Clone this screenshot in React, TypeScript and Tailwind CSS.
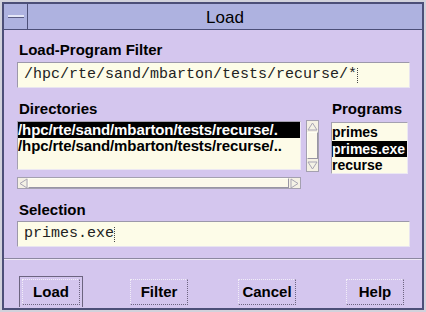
import React from "react"

const sans = { fontFamily: '"Liberation Sans", Arial, sans-serif' }

function Arrow({ dir }: { dir: "up" | "down" | "left" | "right" }) {
  const pts = {
    up: "1,8 5.5,1 10,8",
    down: "1,1 5.5,8 10,1",
    left: "8,1 1,5.5 8,10",
    right: "1,1 8,5.5 1,10",
  }[dir]
  return (
    <svg width={dir === "up" || dir === "down" ? 11 : 9} height={dir === "up" || dir === "down" ? 9 : 11}>
      <polygon points={pts} fill="#f4f2e6" stroke="#a8a4b4" strokeWidth="1" />
    </svg>
  )
}

function Label({ children, className = "" }: { children: React.ReactNode; className?: string }) {
  return <div className={"text-[15px] leading-[17px] font-bold text-black " + className}>{children}</div>
}

function TextField({ value }: { value: string }) {
  return (
    <div className="h-[26px] flex items-center bg-[#fdfce8] border border-[#9c98aa] border-b-[#e8e4f0] border-r-[#e8e4f0] pl-[6px]">
      <span className="text-[15px] text-[#222] font-['Liberation_Mono',monospace]">{value}</span>
      <span className="w-[2px] h-[15px] border-l border-dotted border-[#444]" />
    </div>
  )
}

function Button({ label }: { label: string }) {
  return (
    <div className="w-[58px] h-[26px] pt-[1px] flex items-center justify-center border border-dotted border-[#f2eef8] border-b-solid border-b-[#6c6480] border-r-[#6c6480] text-[15px] font-bold text-black">
      {label}
    </div>
  )
}

export default function App() {
  const dirs = ["/hpc/rte/sand/mbarton/tests/recurse/.", "/hpc/rte/sand/mbarton/tests/recurse/.."]
  const progs = ["primes", "primes.exe", "recurse"]
  return (
    <div className="w-[426px] h-[312px] bg-[#d2d2dc] p-[2px]" style={sans}>
      <div className="h-full flex flex-col border-2 border-[#4c4f78]">
        <div className="h-[26px] flex bg-[#aeb2e0] border-b border-[#4c4f78]">
          <div className="w-[24px] flex items-center justify-center border-r border-[#4c4f78]">
            <div className="w-[16px] h-[3px] bg-[#e4e6f8] border-b border-[#5a5c84]" />
          </div>
          <div className="flex-1 flex items-center justify-center text-[17px] text-black pt-[2px]">Load</div>
        </div>
        <div className="flex-1 flex flex-col bg-[#d4c6ee]">
          <div className="pt-[11px] pl-[13px] pr-[12px]">
            <Label className="pl-[2px]">Load-Program Filter</Label>
            <div className="mt-[4px]">
              <TextField value="/hpc/rte/sand/mbarton/tests/recurse/*" />
            </div>
            <div className="mt-[12px] flex gap-[12px]">
              <div className="w-[302px]">
                <Label className="pl-[2px]">Directories</Label>
                <div className="mt-[4px] flex gap-[5px]">
                  <div className="w-[284px] h-[49px] bg-[#fdfbe8] border border-[#a4a0b0] border-b-[#ece8f2] border-r-[#ece8f2] overflow-hidden">
                    {dirs.map((d, i) => (
                      <div
                        key={d}
                        className={
                          "h-[16px] leading-[16px] text-[15px] font-bold whitespace-nowrap tracking-[-0.1px] " +
                          (i === 0 ? "bg-black text-white" : "text-black")
                        }
                      >
                        {d}
                      </div>
                    ))}
                  </div>
                  <div className="w-[13px] h-[52px] -mt-[1px] flex flex-col bg-[#f4f0e4] border border-[#a4a0b0]">
                    <div className="h-[11px] flex items-center justify-center">
                      <Arrow dir="up" />
                    </div>
                    <div className="flex-1 bg-[#fbf8ea] border border-[#fffff4] border-b-[#9894a4] border-r-[#9894a4]" />
                    <div className="h-[12px] flex items-center justify-center">
                      <Arrow dir="down" />
                    </div>
                  </div>
                </div>
                <div className="mt-[5px] w-[284px] h-[12px] flex bg-[#f4f0e4] border border-[#a4a0b0]">
                  <div className="w-[10px] flex items-center justify-center">
                    <Arrow dir="left" />
                  </div>
                  <div className="flex-1 bg-[#fbf8ea] border border-[#fffff4] border-b-[#9894a4] border-r-[#9894a4]" />
                  <div className="w-[11px] flex items-center justify-center">
                    <Arrow dir="right" />
                  </div>
                </div>
              </div>
              <div className="w-[77px]">
                <Label className="pl-[1px]">Programs</Label>
                <div className="mt-[5px] h-[52px] bg-[#fdfbe8] border border-[#a4a0b0] border-b-[#ece8f2] border-r-[#ece8f2] pt-[1px] overflow-hidden">
                  {progs.map((p, i) => (
                    <div
                      key={p}
                      className={
                        "h-[16.5px] leading-[16.5px] text-[14px] font-bold whitespace-nowrap " +
                        (i === 1 ? "bg-black text-white" : "text-black")
                      }
                    >
                      {p}
                    </div>
                  ))}
                </div>
              </div>
            </div>
            <Label className="mt-[12px] pl-[2px]">Selection</Label>
            <div className="mt-[3px]">
              <TextField value="primes.exe" />
            </div>
          </div>
          <div className="mt-[11px] border-t border-[#8c88a0] border-b border-b-[#eee8f6]" />
          <div className="flex-1 flex items-end pb-[1px] pl-[15px] gap-[47px]">
            <div className="p-[2px] border border-[#6c6480] border-b-0 border-r-[#6c6480]">
              <Button label="Load" />
            </div>
            <div className="pb-[2px]">
              <Button label="Filter" />
            </div>
            <div className="pb-[2px] ml-[3px]">
              <Button label="Cancel" />
            </div>
            <div className="pb-[2px] ml-[3px]">
              <Button label="Help" />
            </div>
          </div>
        </div>
      </div>
    </div>
  )
}
